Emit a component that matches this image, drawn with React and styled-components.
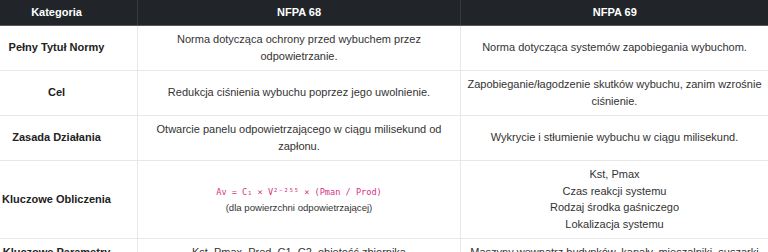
import React from 'react';
import styled, { createGlobalStyle } from 'styled-components';

const Global = createGlobalStyle`
body{
    margin: 0;
    background: #fff;
    font-family: "Liberation Sans", Arial, sans-serif;
    font-size: 11px;
    line-height: 1.5;
    color: #333;
}
`;

// the table is wider than the window and scrolled a little to the right
const Frame = styled.div`
width: 768px;
height: 252px;
overflow: hidden;
`;

const Table = styled.table`
width: 793px;
margin-left: -25px;
border-collapse: collapse;
table-layout: fixed;
`;

const Head = styled.th`
background: #212529;
color: #fff;
font-weight: bold;
text-align: center;
padding: 4px 2px 4px;
border-left: 1px solid #373b3e;
border-bottom: 1px solid #54595e;
`;

const Cell = styled.td`
text-align: center;
vertical-align: middle;
padding: 5.5px 2px;
border: 1px solid #e6e8ea;
border-top: none;
font-weight: ${p => (p.$label ? 'bold' : 'normal')};
color: ${p => (p.$label ? '#222' : '#333')};
`;

const Formula = styled.code`
font-family: "DejaVu Sans Mono", "Liberation Mono", monospace;
font-size: 8.6px;
color: #d63384;
`;

const Note = styled.small`
font-size: 9.6px;
`;

const rows = [
    {
        label: 'Pełny Tytuł Normy',
        a: 'Norma dotycząca ochrony przed wybuchem przez odpowietrzanie.',
        b: 'Norma dotycząca systemów zapobiegania wybuchom.',
    },
    {
        label: 'Cel',
        a: 'Redukcja ciśnienia wybuchu poprzez jego uwolnienie.',
        b: 'Zapobieganie/łagodzenie skutków wybuchu, zanim wzrośnie ciśnienie.',
    },
    {
        label: 'Zasada Działania',
        a: 'Otwarcie panelu odpowietrzającego w ciągu milisekund od zapłonu.',
        b: 'Wykrycie i stłumienie wybuchu w ciągu milisekund.',
    },
    {
        label: 'Kluczowe Obliczenia',
        a: (
            <>
                <Formula>Av = C₁ × V²⁻²⁵⁵ × (Pman / Prod)</Formula>
                <br />
                <Note>(dla powierzchni odpowietrzającej)</Note>
            </>
        ),
        b: (
            <>
                Kst, Pmax<br />
                Czas reakcji systemu<br />
                Rodzaj środka gaśniczego<br />
                Lokalizacja systemu
            </>
        ),
    },
    {
        label: 'Kluczowe Parametry',
        a: 'Kst, Pmax, Pred, C1, C2, objętość zbiornika',
        b: 'Maszyny wewnątrz budynków, kanały, mieszalniki, suszarki',
    },
];

const App = () => {
    return (
        <Frame>
            <Global />
            <Table>
                <colgroup>
                    <col style={{ width: 162 }} />
                    <col style={{ width: 323 }} />
                    <col style={{ width: 308 }} />
                </colgroup>
                <thead>
                    <tr>
                        <Head>Kategoria</Head>
                        <Head>NFPA 68</Head>
                        <Head>NFPA 69</Head>
                    </tr>
                </thead>
                <tbody>
                    {rows.map(r => (
                        <tr key={r.label}>
                            <Cell $label>{r.label}</Cell>
                            <Cell>{r.a}</Cell>
                            <Cell>{r.b}</Cell>
                        </tr>
                    ))}
                </tbody>
            </Table>
        </Frame>
    );
};

export default App;
